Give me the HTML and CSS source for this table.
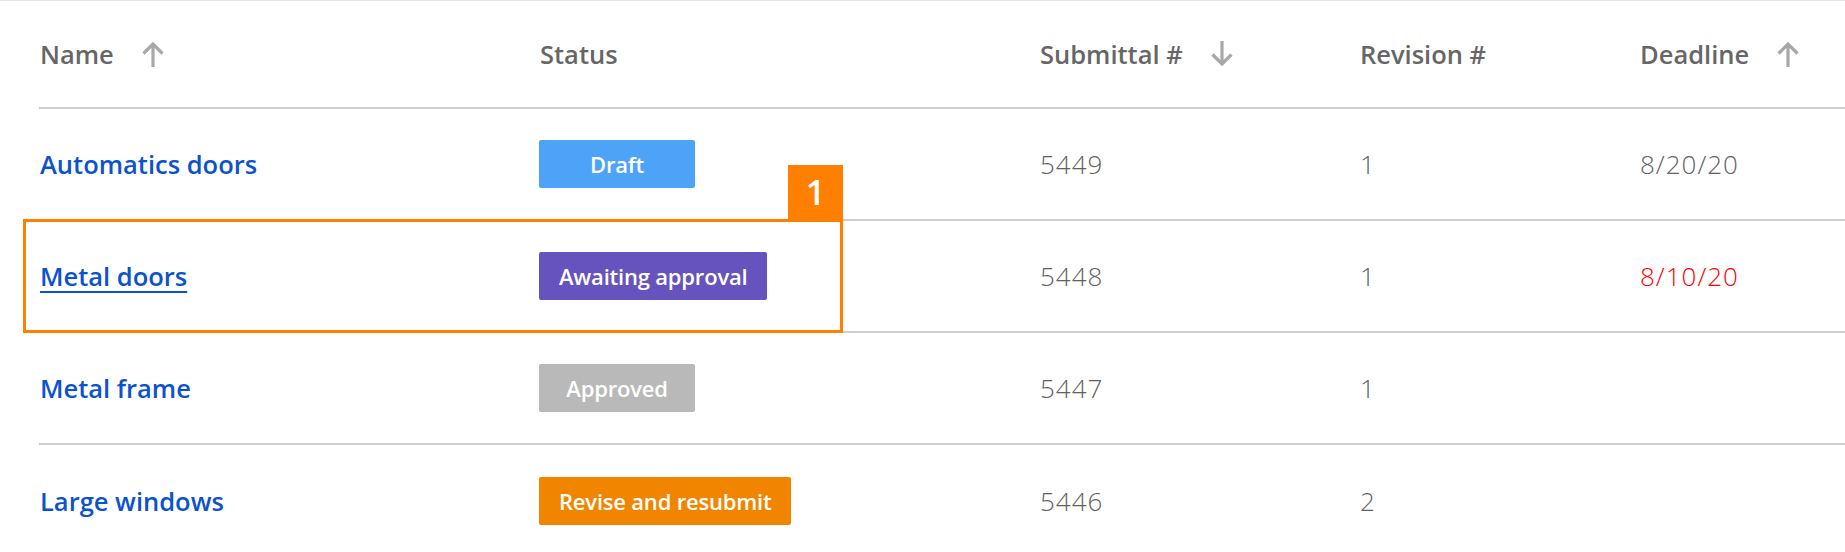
FILE: index.html
```html
<!DOCTYPE html>
<html lang="en">
<head>
<meta charset="utf-8">
<title>Submittals</title>
<link rel="stylesheet" href="styles.css">
</head>
<body>
<div class="page">
  <div class="table">
    <div class="row head">
      <div class="cell"><span class="th">Name</span><svg class="sort" viewBox="0 0 24 26"><path d="M12 3V26M2.5 12.5L12 3L21.5 12.5"/></svg></div>
      <div class="cell"><span class="th">Status</span></div>
      <div class="cell"><span class="th">Submittal #</span><svg class="sort" viewBox="0 0 24 26"><path d="M12 0V23M2.5 13.5L12 23L21.5 13.5"/></svg></div>
      <div class="cell"><span class="th">Revision #</span></div>
      <div class="cell"><span class="th">Deadline</span><svg class="sort" viewBox="0 0 24 26"><path d="M12 3V26M2.5 12.5L12 3L21.5 12.5"/></svg></div>
    </div>
    <div class="row">
      <div class="cell"><a class="link">Automatics doors</a></div>
      <div class="cell"><span class="badge draft">Draft</span></div>
      <div class="cell num">5449</div>
      <div class="cell num">1</div>
      <div class="cell num">8/20/20</div>
    </div>
    <div class="row focus">
      <div class="cell"><a class="link underline">Metal doors</a></div>
      <div class="cell"><span class="badge awaiting">Awaiting approval</span></div>
      <div class="cell num">5448</div>
      <div class="cell num">1</div>
      <div class="cell num late">8/10/20</div>
      <div class="marker"><span class="marker-label">1</span></div>
    </div>
    <div class="row">
      <div class="cell"><a class="link">Metal frame</a></div>
      <div class="cell"><span class="badge approved">Approved</span></div>
      <div class="cell num">5447</div>
      <div class="cell num">1</div>
      <div class="cell num"></div>
    </div>
    <div class="row last">
      <div class="cell"><a class="link">Large windows</a></div>
      <div class="cell"><span class="badge revise">Revise and resubmit</span></div>
      <div class="cell num">5446</div>
      <div class="cell num">2</div>
      <div class="cell num"></div>
    </div>
  </div>
</div>
</body>
</html>
```

FILE: styles.css
```css
* { box-sizing: border-box; }
html, body { margin: 0; padding: 0; background: #fff; }
body {
  font-family: "Open Sans", "Noto Sans", sans-serif;
  color: #666;
  overflow: hidden;
}
.page {
  border-top: 1px solid #e6e6e6;
  padding-left: 39px;
}
.table { display: flex; flex-direction: column; }
.row {
  display: grid;
  grid-template-columns: 500px 500px 320px 280px 1fr;
  height: 112px;
  border-bottom: 2px solid #cfcfcf;
  align-items: center;
  position: relative;
}
.row.head { height: 108px; }
.row.last { border-bottom: none; }
.cell {
  display: flex;
  align-items: center;
  padding-left: 1px;
}
.th {
  font-size: 25.5px;
  font-weight: 600;
  color: #666;
}
.sort {
  width: 24px;
  height: 26px;
  margin-left: 27px;
  fill: none;
  stroke: #a8a8a8;
  stroke-width: 3.2;
}
.link {
  font-size: 25.5px;
  font-weight: 600;
  color: #0b52cf;
  text-decoration: none;
}
.link.underline { text-decoration: underline; text-underline-offset: 5px; text-decoration-thickness: 2px; }
.num {
  font-size: 26px;
  font-weight: 300;
  letter-spacing: 1px;
  color: #626262;
}
.num.late { color: #ff0000; }
.badge {
  display: inline-flex;
  align-items: center;
  justify-content: center;
  height: 48px;
  min-width: 156px;
  padding: 0 20px;
  border-radius: 2px;
  color: #fff;
  font-size: 22px;
  font-weight: 600;
  margin-left: -1px;
  letter-spacing: -0.2px;
}
.draft { background: #4da3f7; }
.awaiting { background: #6653bd; }
.approved { background: #b9b9b9; }
.revise { background: #f28500; }
.marker {
  position: absolute;
  left: -16px;
  top: -2px;
  width: 820px;
  height: 114px;
  border: 3px solid #ff7f00;
  pointer-events: none;
}
.marker-label {
  position: absolute;
  right: -3px;
  top: -57px;
  width: 55px;
  height: 54px;
  background: #ff7f00;
  color: #fff;
  font-size: 34px;
  font-weight: 600;
  display: flex;
  align-items: center;
  justify-content: center;
}
```
